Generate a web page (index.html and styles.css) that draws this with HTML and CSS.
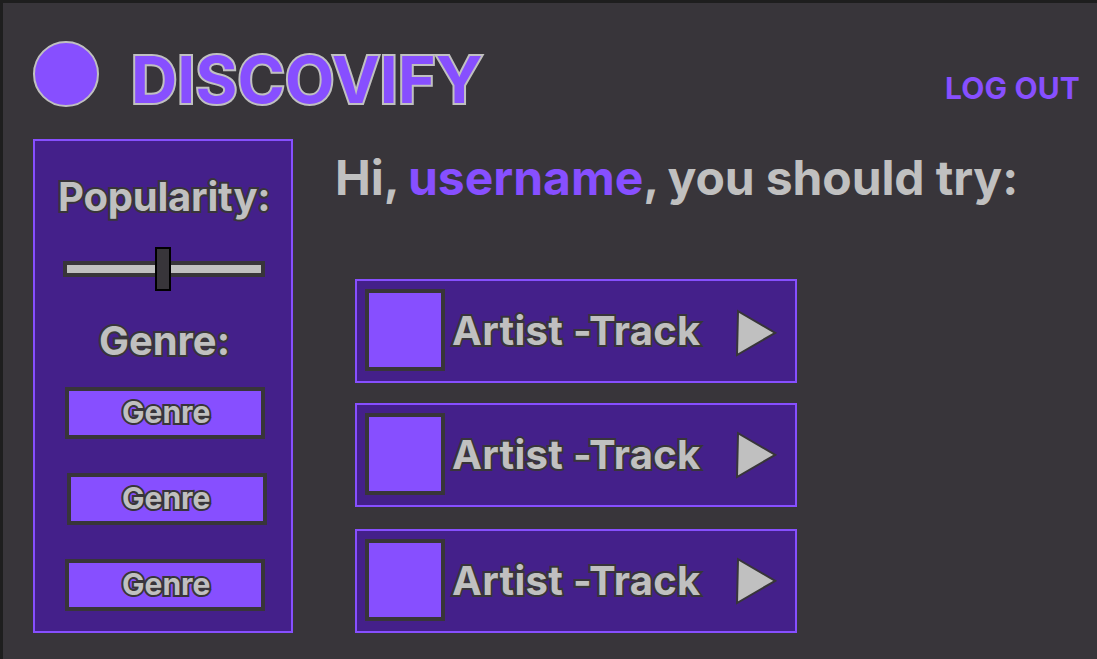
FILE: index.html
```html
<!DOCTYPE html>
<html lang="en">
<head>
<meta charset="utf-8">
<title>Discovify</title>
<link rel="stylesheet" href="styles.css">
</head>
<body>
<div class="app">
  <header class="header">
    <div class="logo"></div>
    <h1 class="brand">DISCOVIFY</h1>
    <a class="logout">LOG OUT</a>
  </header>
  <div class="content">
    <aside class="sidebar">
      <h2 class="label label-popularity">Popularity:</h2>
      <div class="slider"><div class="thumb"></div></div>
      <h2 class="label label-genre">Genre:</h2>
      <div class="genres">
        <div class="genre"><span>Genre</span></div>
        <div class="genre genre-shifted"><span>Genre</span></div>
        <div class="genre"><span>Genre</span></div>
      </div>
    </aside>
    <main class="main">
      <p class="greeting">Hi<span class="comma">,</span> <span class="user">username</span><span class="comma">,</span> you should try:</p>
      <div class="tracks">
        <div class="track">
          <div class="cover"></div>
          <span class="name">Artist -Track</span>
          <svg class="play play-first" width="44" height="50" viewBox="0 0 44 50"><polygon points="5,3.2 4,47 42.2,24.8"/></svg>
        </div>
        <div class="track">
          <div class="cover"></div>
          <span class="name">Artist -Track</span>
          <svg class="play" width="44" height="50" viewBox="0 0 44 50"><polygon points="5,3.2 4,47 42.2,24.8"/></svg>
        </div>
        <div class="track track-last">
          <div class="cover"></div>
          <span class="name">Artist -Track</span>
          <svg class="play" width="44" height="50" viewBox="0 0 44 50"><polygon points="5,3.2 4,47 42.2,24.8"/></svg>
        </div>
      </div>
    </main>
  </div>
</div>
</body>
</html>
```
FILE: styles.css
```css
* { box-sizing: border-box; margin: 0; padding: 0; }
body {
  font-family: Inter, "Liberation Sans", sans-serif;
  font-weight: 700;
  color: #c0c0c0;
  background: #38353a;
  overflow: hidden;
}
.app {
  width: 1097px;
  height: 659px;
  border-top: 3px solid #1e1e1e;
  border-left: 3px solid #1e1e1e;
  padding-left: 30px;
  overflow: hidden;
}
.header { display: flex; height: 136px; padding-top: 38px; }
.logo {
  width: 66px;
  height: 66px;
  border: 2px solid #c0c0c0;
  border-radius: 50%;
  background: #874fff;
}
.brand {
  margin-left: 32px;
  font-size: 64px;
  line-height: 78px;
  font-weight: 720;
  letter-spacing: 0.15px;
  color: #874fff;
  -webkit-text-stroke: 4px #c0c0c0;
  paint-order: stroke fill;
  white-space: nowrap;
}
.logout {
  margin: 29px 17px 0 auto;
  font-size: 30px;
  line-height: 36px;
  letter-spacing: 0.15px;
  color: #874fff;
  white-space: nowrap;
}
.content { display: flex; }
.sidebar {
  width: 260px;
  height: 494px;
  border: 2px solid #874fff;
  background: #44208a;
  display: flex;
  flex-direction: column;
}
.label, .genre, .name {
  -webkit-text-stroke: 4px #38353a;
  paint-order: stroke fill;
  white-space: nowrap;
}
.label { font-size: 40px; line-height: 48px; letter-spacing: -0.2px; }
.label-popularity { margin: 32px 0 0 23px; }
.label-genre { margin: 40px 0 0 64px; letter-spacing: -0.05px; }
.slider {
  width: 202px;
  height: 16px;
  margin: 40px 0 0 28px;
  border: 4px solid #38353a;
  background: #c0c0c0;
  display: flex;
  align-items: center;
  justify-content: center;
}
.thumb {
  flex: none;
  width: 16px;
  height: 44px;
  margin-right: 2px;
  border: 2px solid #000;
  background: #38353a;
}
.genres { display: flex; flex-direction: column; gap: 34px; margin: 22px 0 0 30px; }
.genre {
  width: 200px;
  height: 52px;
  border: 4px solid #38353a;
  background: #874fff;
  padding-left: 53px;
  font-size: 30px;
  line-height: 42px;
}
.genre-shifted { margin-left: 2px; padding-left: 51px; }
.main { padding-left: 42px; }
.greeting { height: 140px; padding-top: 10px; font-size: 48px; line-height: 58px; letter-spacing: -0.12px; white-space: nowrap; }
.comma { letter-spacing: -3px; }
.user { color: #874fff; letter-spacing: 0; }
.tracks { display: flex; flex-direction: column; gap: 20px; margin-left: 20px; }
.track {
  display: flex;
  width: 442px;
  height: 104px;
  border: 2px solid #874fff;
  background: #44208a;
  padding: 8px;
}
.track-last { margin-top: 2px; }
.cover { width: 80px; height: 82px; border: 4px solid #38353a; background: #874fff; }
.name { margin-left: 7px; padding-top: 18px; width: 281px; font-size: 40px; line-height: 48px; letter-spacing: 0.3px; }
.play { display: block; margin-top: 17px; }
.play-first { margin-top: 19px; }
.play polygon { fill: #c0c0c0; stroke: #38353a; stroke-width: 2; }
```
